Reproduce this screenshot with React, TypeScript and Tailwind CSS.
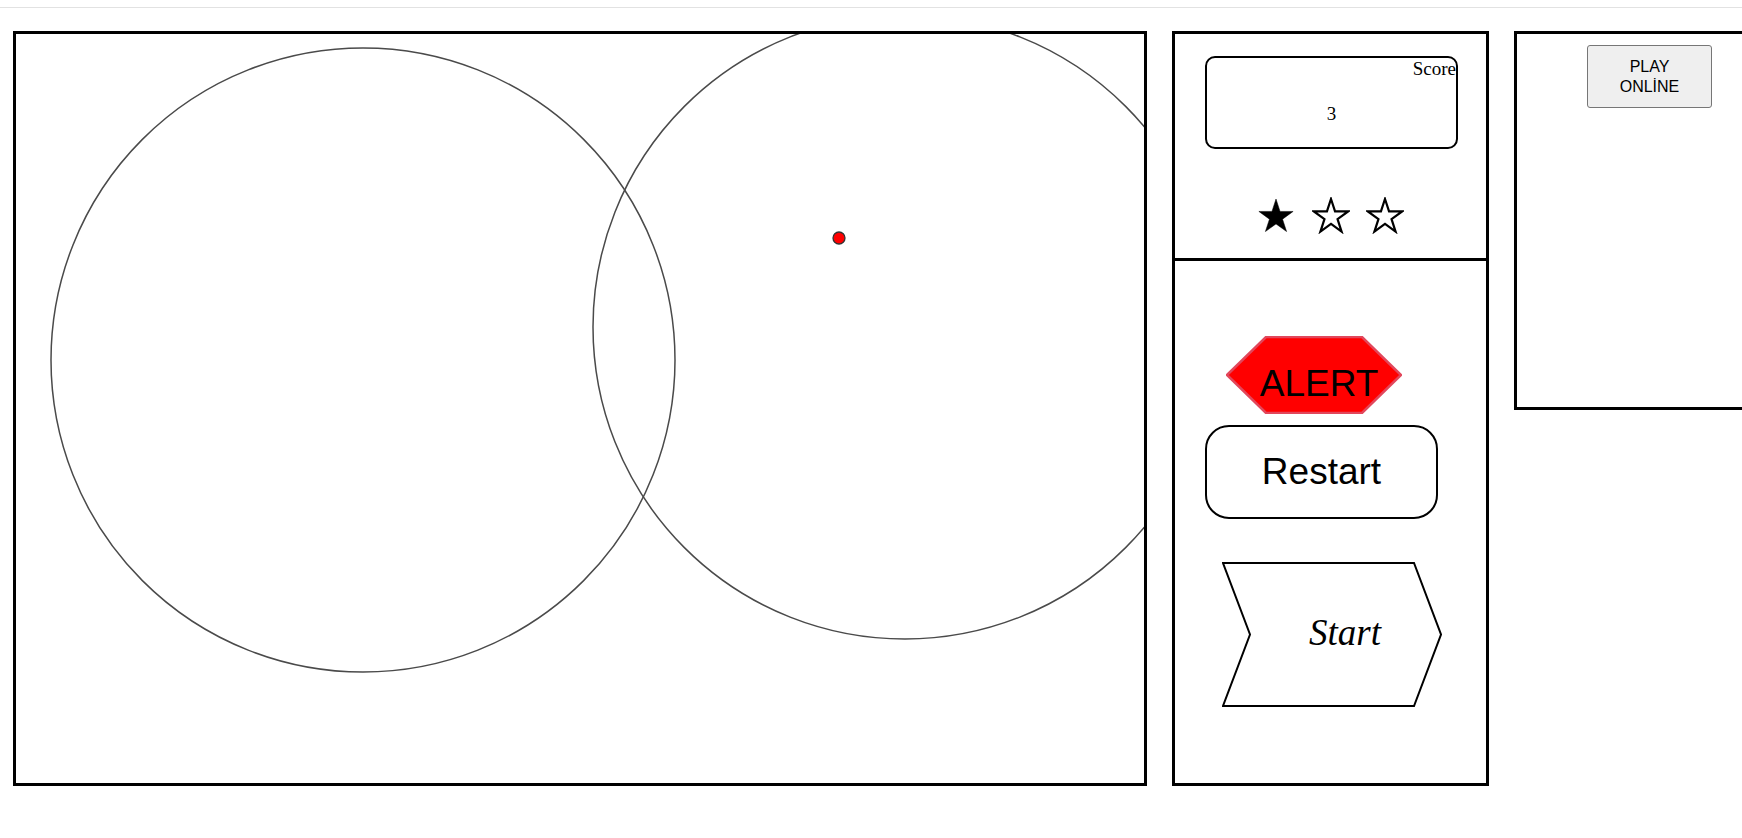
import React from "react";

const STAR = "18,1 22.04,13.43 35.12,13.44 24.54,21.13 28.58,33.56 18,25.88 7.42,33.56 11.46,21.13 0.88,13.44 13.96,13.43";

function Star({ filled }: { filled: boolean }) {
  return (
    <svg width="38" height="37" viewBox="-1 -1 38 37" className="block">
      <polygon
        points={STAR}
        fill={filled ? "#000" : "#fff"}
        stroke="#000"
        strokeWidth={filled ? 0.5 : 2.2}
        strokeLinejoin="miter"
      />
    </svg>
  );
}

export default function App() {
  return (
    <div className="w-[1742px] h-[838px] overflow-hidden bg-white relative">
      <div className="h-[8px] border-b border-[#e2e2e2]" />
      <div className="flex items-start gap-[25px] pl-[13px] mt-[23px]">
        {/* Game board */}
        <div className="w-[1134px] h-[755px] shrink-0 border-[3px] border-black relative">
          <svg width="1128" height="749" viewBox="0 0 1128 749" className="block overflow-hidden">
            <circle cx="347" cy="326" r="312" fill="none" stroke="#4a4a4a" strokeWidth="1.5" />
            <circle cx="889" cy="293" r="312" fill="none" stroke="#4a4a4a" strokeWidth="1.5" />
            <circle cx="823" cy="204" r="6" fill="#ff0000" stroke="#333" strokeWidth="1.3" />
          </svg>
        </div>

        {/* Sidebar */}
        <div className="w-[317px] h-[755px] shrink-0 border-[3px] border-black flex flex-col">
          <div className="h-[227px] border-b-[3px] border-black pt-[22px] flex flex-col">
            <div className="ml-[30px] w-[253px] h-[93px] border-2 border-black rounded-[10px] text-[19px] text-black font-['Liberation_Serif',serif]">
              <div className="text-right leading-[22px]">Score</div>
              <div className="text-center leading-[22px] mt-[23px]">3</div>
            </div>
            <div className="flex justify-center gap-[16.5px] mt-[48px]">
              <Star filled />
              <Star filled={false} />
              <Star filled={false} />
            </div>
          </div>
          <div className="flex-1 flex flex-col items-start">
            <div className="ml-[51px] mt-[75px] relative w-[176px] h-[78px]">
              <svg width="176" height="78" viewBox="0 0 176 78" className="absolute inset-0">
                <polygon
                  points="1,39 40,1 136,1 175,39 136,77 40,77"
                  fill="#ff0000"
                  stroke="#e2475b"
                  strokeWidth="2.5"
                />
              </svg>
              <div className="absolute inset-0 flex items-center justify-center pt-[16px] pl-[10px] text-[37px] leading-none text-black font-['Liberation_Sans',Arial,sans-serif]">
                ALERT
              </div>
            </div>
            <button className="ml-[30px] mt-[11px] w-[233px] h-[94px] border-2 border-black rounded-[24px] bg-white flex items-center justify-center text-[37px] text-black font-['Liberation_Sans',Arial,sans-serif]">
              Restart
            </button>
            <div className="ml-[47px] mt-[43px] relative w-[220px] h-[145px]">
              <svg width="220" height="145" viewBox="0 0 220 145" className="absolute inset-0">
                <polygon
                  points="1,1 192,1 219,72.5 192,144 1,144 28,72.5"
                  fill="#fff"
                  stroke="#000"
                  strokeWidth="2"
                />
              </svg>
              <div className="absolute inset-0 flex items-center justify-center pl-[26px] pb-[4px] text-[37px] italic text-black font-['Liberation_Serif',serif]">
                Start
              </div>
            </div>
          </div>
        </div>

        {/* Online panel */}
        <div className="w-[280px] h-[379px] shrink-0 border-[3px] border-black">
          <button className="ml-[70px] mt-[11px] w-[125px] h-[63px] bg-[#efefef] border border-[#767676] rounded-[3px] text-[16px] leading-[20px] text-black text-center font-['Liberation_Sans',Arial,sans-serif]">
            PLAY
            <br />
            ONLİNE
          </button>
        </div>
      </div>
    </div>
  );
}
